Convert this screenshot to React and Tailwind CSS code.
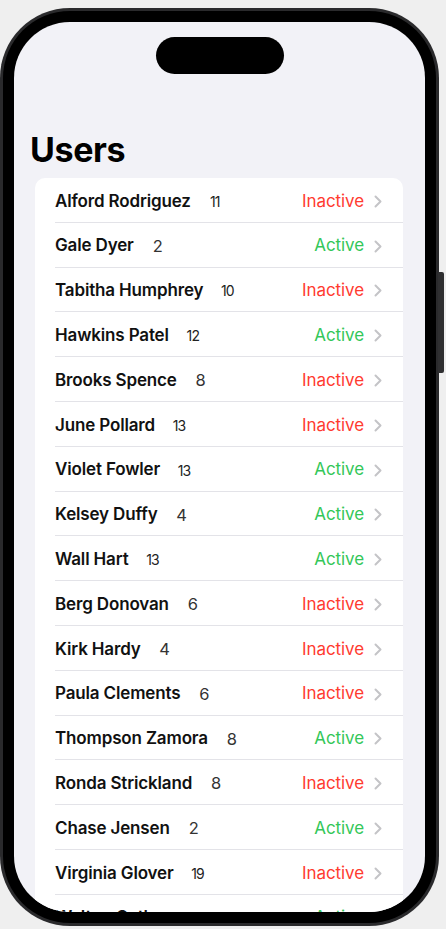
import React from "react";

const users = [
  ["Alford Rodriguez", 11, false],
  ["Gale Dyer", 2, true],
  ["Tabitha Humphrey", 10, false],
  ["Hawkins Patel", 12, true],
  ["Brooks Spence", 8, false],
  ["June Pollard", 13, false],
  ["Violet Fowler", 13, true],
  ["Kelsey Duffy", 4, true],
  ["Wall Hart", 13, true],
  ["Berg Donovan", 6, false],
  ["Kirk Hardy", 4, false],
  ["Paula Clements", 6, false],
  ["Thompson Zamora", 8, true],
  ["Ronda Strickland", 8, false],
  ["Chase Jensen", 2, true],
  ["Virginia Glover", 19, false],
  ["Walton Cathey", 7, true],
];

function Chevron() {
  return (
    <svg width="8" height="13" viewBox="0 0 8 13" fill="none" className="shrink-0">
      <path d="M1.5 1.5L6.5 6.5L1.5 11.5" stroke="#c4c4c7" strokeWidth="2" strokeLinecap="round" strokeLinejoin="round" />
    </svg>
  );
}

function Row({ name, num, active }) {
  const two = num >= 10;
  return (
    <div className="pl-[20px]">
      <div className="flex items-center h-[44.8px] pt-[3px] border-b border-[#e3e3e8] pr-[21px]">
        <span className="text-[17px] font-semibold text-[#111] tracking-[-0.15px]">{name}</span>
        <span
          className={
            two
              ? "ml-[12px] w-[24px] text-center text-[14px] tracking-[-0.8px] text-[#222]"
              : "ml-[12px] w-[24px] text-center text-[16.5px] text-[#333]"
          }
        >
          {num}
        </span>
        <span
          className={
            active
              ? "ml-auto text-[17px] text-[#34c759] tracking-[-0.1px]"
              : "ml-auto text-[17px] text-[#ff3b30] tracking-[-0.1px]"
          }
        >
          {active ? "Active" : "Inactive"}
        </span>
        <span className="ml-[10px] flex items-center">
          <Chevron />
        </span>
      </div>
    </div>
  );
}

export default function App() {
  return (
    <div
      className="relative w-[446px] h-[929px] overflow-hidden bg-[#efefef]"
      style={{ fontFamily: "Inter, 'Noto Sans', sans-serif" }}
    >
      <div className="relative mt-[8px] w-[439px] h-[918px] rounded-[70px] bg-[#2a2a2c] p-[3px]">
        <div className="absolute right-[-5px] top-[264px] w-[6px] h-[101px] rounded-r-[2px] bg-[#2f2f31]" />
        <div className="w-full h-full rounded-[67px] bg-black p-[11px]">
          <div className="w-full h-full rounded-[56px] bg-[#f2f2f7] overflow-hidden flex flex-col">
            <div className="mx-auto mt-[15px] w-[128px] h-[37px] rounded-full bg-black shrink-0" />
            <div className="mt-[55px] pl-[16px] text-[34px] leading-[41px] font-bold text-black tracking-[-0.4px] shrink-0">
              Users
            </div>
            <div className="mt-[8px] ml-[21px] mr-[22px] rounded-[10px] bg-white shrink-0">
              {users.map(([n, c, a]) => (
                <Row key={n} name={n} num={c} active={a} />
              ))}
            </div>
          </div>
        </div>
      </div>
    </div>
  );
}
